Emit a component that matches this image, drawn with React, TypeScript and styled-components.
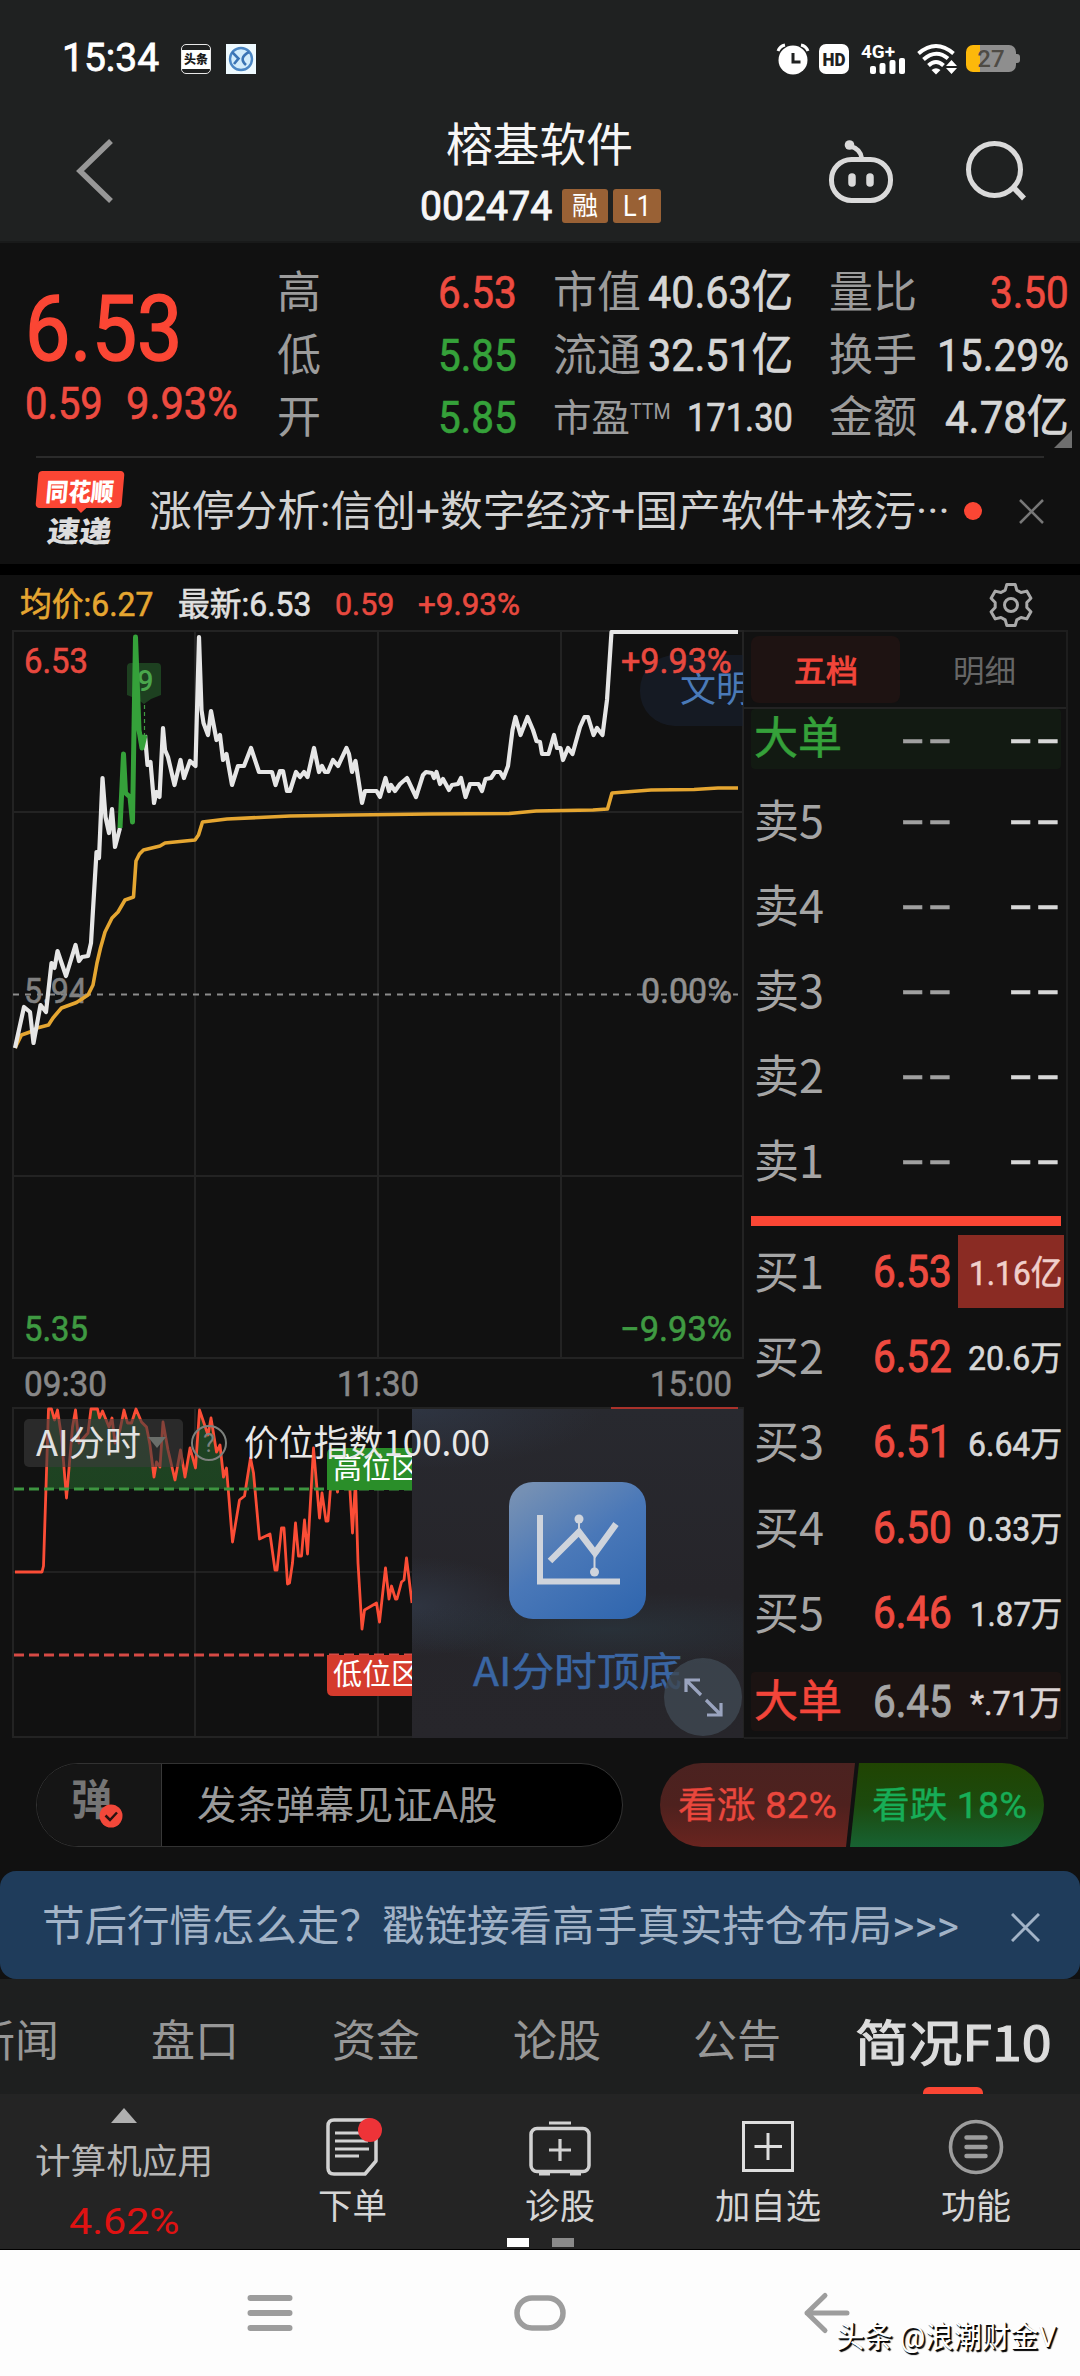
import React, { useLayoutEffect, useRef, useState } from 'react';
import styled, { createGlobalStyle } from 'styled-components';

const RED = '#fb4634';
const GREEN = '#35a13a';
const LATIN = `Roboto, "Noto Sans CJK SC", sans-serif`;
const CJK = `"Noto Sans CJK SC", sans-serif`;

const Global = createGlobalStyle`
  * { box-sizing: border-box; }
  html, body { margin: 0; padding: 0; background: #111; }
  body { font-family: ${LATIN}; }
  svg { display: block; flex: none; }
`;

/* ---------- text fitted to a fixed measure ---------- */
const FitBox = styled.span<{ $w: number; $size: number; $color: string; $weight: number; $cjk?: boolean; $ml: number; $spacing: number; $stroke: number }>`
  display: block;
  flex: none;
  width: ${p => p.$w}px;
  margin-left: ${p => p.$ml}px;
  font-family: ${p => (p.$cjk ? CJK : LATIN)};
  font-size: ${p => p.$size}px;
  line-height: ${p => Math.round(p.$size * 1.1)}px;
  font-weight: ${p => p.$weight};
  letter-spacing: ${p => p.$spacing}px;
  -webkit-text-stroke: ${p => p.$stroke}px ${p => p.$color};
  color: ${p => p.$color};
  white-space: pre;
`;
const FitInner = styled.span`
  display: inline-block;
  transform-origin: 0 50%;
`;

type FitProps = { w: number; size: number; color?: string; weight?: number; cjk?: boolean; ml?: number; spacing?: number; stroke?: number; children: React.ReactNode };
function Fit({ w, size, color = '#d6d6d6', weight = 400, cjk, ml = 0, spacing = 0, stroke = 0, children }: FitProps) {
  const ref = useRef<HTMLSpanElement>(null);
  const [scale, setScale] = useState(1);
  useLayoutEffect(() => {
    if (ref.current) setScale(w / ref.current.offsetWidth);
  }, [w, children]);
  return (
    <FitBox $w={w} $size={size} $color={color} $weight={weight} $cjk={cjk} $ml={ml} $spacing={spacing} $stroke={stroke}>
      <FitInner ref={ref} style={{ transform: `scaleX(${scale})` }}>{children}</FitInner>
    </FitBox>
  );
}

/* ---------- shell ---------- */
const Screen = styled.div`
  width: 1080px;
  height: 2376px;
  background: #111;
  overflow: hidden;
  display: flex;
  flex-direction: column;
`;
const Top = styled.header`
  height: 243px;
  background: #1f2121;
  border-bottom: 2px solid #191a1a;
  flex: none;
`;
const StatusBar = styled.div`
  height: 92px;
  padding: 25px 60px 0 62px;
  display: flex;
  align-items: center;
  justify-content: space-between;
`;
const Cluster = styled.div<{ $gap: number }>`
  display: flex;
  align-items: center;
  gap: ${p => p.$gap}px;
`;
const ToutiaoIcon = styled.span`
  width: 30px;
  height: 30px;
  border: 1px solid #e8e8e8;
  border-radius: 5px;
  background: linear-gradient(#1f2121 0 5px, #fff 5px 24px, #1f2121 24px);
  font: 900 12px/28px ${CJK};
  color: #1c1c1c;
  text-align: center;
  margin-left: 22px;
`;
const Battery = styled.span`
  width: 50px;
  height: 27px;
  border-radius: 7px;
  background: linear-gradient(90deg, #fdb80a 0 14px, #8e8e8e 14px);
  font: 500 24px/28px Roboto, sans-serif;
  color: #4e4b45;
  text-align: center;
  margin-right: 4px;
  position: relative;
  &::after {
    content: '';
    position: absolute;
    right: -4px;
    top: 9px;
    width: 4px;
    height: 9px;
    border-radius: 0 3px 3px 0;
    background: #8e8e8e;
  }
`;
const TitleBar = styled.div`
  height: 150px;
  display: grid;
  grid-template-columns: 421px 245px 1fr;
`;
const BackCell = styled.div`padding: 46px 0 0 74px;`;
const TitleCell = styled.div`
  display: flex;
  flex-direction: column;
  padding-top: 24px;
`;
const CodeRow = styled.div`
  display: flex;
  align-items: center;
  margin-top: 21px;
  height: 36px;
`;
const Badges = styled.div`
  display: flex;
  gap: 5px;
  margin-left: 10px;
`;
const Badge = styled.span<{ $w: number }>`
  width: ${p => p.$w}px;
  height: 34px;
  border-radius: 3px;
  background: #996135;
  display: flex;
  align-items: center;
  justify-content: center;
`;
const ActionCell = styled.div`
  display: flex;
  gap: 40px;
  padding: 46px 0 0 160px;
`;

/* ---------- quote ---------- */
const Quote = styled.section`
  height: 213px;
  margin: 0 8px 0 0;
  padding-top: 19px;
  display: flex;
  position: relative;
  flex: none;
`;
const PriceCol = styled.div`
  width: 277px;
  padding: 17px 0 0 25px;
`;
const PriceRow = styled.div<{ $h: number }>`
  display: flex;
  align-items: center;
  height: ${p => p.$h}px;
`;
const StatCol = styled.div<{ $w: number; $ml: number }>`
  width: ${p => p.$w}px;
  margin-left: ${p => p.$ml}px;
`;
const Stat = styled.div`
  height: 62.5px;
  display: flex;
  align-items: center;
  justify-content: space-between;
`;
const Sup = styled.span`
  display: flex;
  align-items: flex-start;
  height: 36px;
`;
const Corner = styled.i`
  position: absolute;
  right: 0;
  bottom: 8px;
  border-left: 18px solid transparent;
  border-bottom: 18px solid #6f6f6f;
`;
const News = styled.section`
  height: 108px;
  margin: 0 36px;
  border-top: 2px solid #2b2b2b;
  display: flex;
  align-items: center;
  flex: none;
`;
const NewsLogo = styled.div`
  width: 90px;
  height: 80px;
  display: flex;
  flex-direction: column;
  align-items: center;
`;
const LogoTop = styled.div`
  width: 86px;
  height: 37px;
  border-radius: 4px;
  background: ${RED};
  transform: skewX(-5deg);
  display: flex;
  align-items: center;
  justify-content: center;
  position: relative;
  &::after {
    content: '';
    position: absolute;
    left: 40px;
    top: 36px;
    border: 6px solid transparent;
    border-top-color: ${RED};
    border-bottom: 0;
  }
`;
const LogoBottom = styled.div`
  transform: skewX(-8deg);
  margin-top: 5px;
`;
const Headline = styled.div`padding: 2px 0 0 25px;`;
const Dot = styled.i`
  width: 18px;
  height: 18px;
  border-radius: 50%;
  background: ${RED};
  margin: 0 37px 0 14px;
`;
const Gap = styled.div`
  height: 11px;
  background: #000;
  flex: none;
`;

/* ---------- market area ---------- */
const LegendBar = styled.div`
  height: 55px;
  padding: 4px 45px 0 21px;
  display: flex;
  align-items: center;
  flex: none;
`;
const Spacer = styled.span`flex: 1;`;
const Market = styled.section`
  display: grid;
  grid-template-columns: 732px 324px;
  padding-left: 12px;
  height: 1109px;
  flex: none;
`;
const Charts = styled.div`position: relative;`;
const BarragePill = styled.div`
  position: absolute;
  left: 628px;
  top: 25px;
  width: 103px;
  height: 71px;
  border-radius: 35px 0 0 35px;
  background: rgba(25, 34, 48, .6);
  padding: 15px 0 0 40px;
  overflow: hidden;
`;
const TopPercent = styled.div`
  position: absolute;
  left: 609px;
  top: 12px;
`;
const Promo = styled.div`
  position: absolute;
  left: 400px;
  top: 779px;
  width: 331px;
  height: 329px;
  overflow: hidden;
  background:
    radial-gradient(ellipse 220px 38px at 60% 67%, rgba(42, 56, 66, .6), transparent),
    radial-gradient(ellipse 120px 50px at 0 60%, rgba(55, 68, 88, .5), transparent),
    radial-gradient(ellipse 190px 60px at 0 0, rgba(50, 60, 78, .6), transparent),
    linear-gradient(#28292f, #26252a 55%, #27262b);
  display: flex;
  flex-direction: column;
  padding: 73px 0 0 61px;
`;
const PromoIcon = styled.div`
  width: 137px;
  height: 137px;
  margin-left: 36px;
  border-radius: 24px;
  background: linear-gradient(145deg, #7590b4 8%, #4a78b8 48%, #2e65ae);
`;
const PromoText = styled.div`margin-top: 28px;`;
const Expand = styled.div`
  position: absolute;
  left: 252px;
  top: 249px;
  width: 78px;
  height: 78px;
  border-radius: 50%;
  background: rgba(62, 72, 82, .82);
`;
const IndexLabel = styled.div`
  position: absolute;
  left: 232px;
  top: 790px;
`;
const Book = styled.div`
  border: 2px solid #1e1e1e;
  border-left: 0;
  padding: 0 5px 0 7px;
`;
const BookTabs = styled.div`
  height: 77px;
  margin: 0 -5px 0 -7px;
  padding: 4px 12px 4px 7px;
  border-bottom: 2px solid #232323;
  display: grid;
  grid-template-columns: 149px 1fr;
`;
const BookTab = styled.div<{ $on?: boolean }>`
  display: flex;
  align-items: center;
  justify-content: center;
  border-radius: 8px;
  padding: 0 0 2px ${p => (p.$on ? 0 : 14)}px;
  background: ${p => (p.$on ? '#1e1312' : 'transparent')};
`;
const BookRow = styled.div<{ $h: number; $bg?: string }>`
  height: ${p => p.$h}px;
  background: ${p => p.$bg || 'transparent'};
  display: grid;
  grid-template-columns: 96px 110px 104px;
  align-items: center;
  padding-left: 3px;
  border-radius: 4px;
`;
const Level = styled.div`padding-bottom: 4px;`;
const Sells = styled.div`padding: 9px 0 2px;`;
const Buys = styled.div`padding-bottom: 17px;`;
const Right = styled.div<{ $pr?: number }>`
  display: flex;
  justify-content: flex-end;
  padding-right: ${p => p.$pr || 0}px;
`;
const VolCell = styled.div<{ $hot?: boolean }>`
  display: flex;
  align-items: center;
  justify-content: flex-end;
  height: ${p => (p.$hot ? 73 : 50)}px;
  margin-left: -2px;
  padding: 4px 2px 0 0;
  background: ${p => (p.$hot ? '#8a2b23' : 'transparent')};
`;
const SplitBar = styled.div`
  height: 10px;
  margin: 11px 0 3px;
  width: 310px;
  background: ${RED};
`;

/* ---------- barrage & banner ---------- */
const Barrage = styled.section`
  height: 132px;
  padding: 24px 36px 24px;
  display: flex;
  gap: 37px;
  flex: none;
`;
const InputPill = styled.div`
  width: 587px;
  height: 84px;
  border: 1px solid #323232;
  border-radius: 42px;
  background: #000;
  display: flex;
  overflow: hidden;
`;
const Toggle = styled.div`
  width: 125px;
  background: #151515;
  border-right: 1px solid #383838;
  padding: 14px 0 0 34px;
  position: relative;
`;
const Check = styled.span`
  position: absolute;
  left: 62px;
  top: 40px;
`;
const Hint = styled.div`
  display: flex;
  align-items: center;
  padding: 2px 0 0 35px;
`;
const Vote = styled.div`
  display: flex;
  width: 384px;
  height: 84px;
  border-radius: 42px;
  overflow: hidden;
`;
const VoteSide = styled.div<{ $up?: boolean }>`
  width: ${p => (p.$up ? 195 : 194)}px;
  margin-left: ${p => (p.$up ? 0 : -5)}px;
  flex: none;
  display: flex;
  align-items: center;
  padding: 2px 0 0 ${p => (p.$up ? 18 : 22)}px;
  background: ${p => (p.$up ? 'linear-gradient(#4b2220, #4e211e 50%, #69241f)' : 'linear-gradient(#204402, #1c4a0e 50%, #176232)')};
  clip-path: ${p => (p.$up ? 'polygon(0 0, 100% 0, 186px 100%, 0 100%)' : 'polygon(9px 0, 100% 0, 100% 100%, 0 100%)')};
`;
const Banner = styled.section`
  height: 108px;
  border-radius: 16px;
  background: #1f3c5b;
  display: flex;
  align-items: center;
  justify-content: space-between;
  padding: 4px 40px 0 42px;
  flex: none;
`;

/* ---------- tabs & toolbar ---------- */
const Tabs = styled.nav`
  height: 115px;
  background: #1e1f1f;
  display: flex;
  align-items: center;
  padding: 11px 0 0;
  position: relative;
  flex: none;
`;
const ActiveTab = styled.div`padding: 0 0 5px 74px;`;
const Indicator = styled.i`
  position: absolute;
  left: 923px;
  top: 108px;
  width: 60px;
  height: 9px;
  border-radius: 6px 6px 2px 2px;
  background: ${RED};
`;
const Toolbar = styled.nav`
  height: 156px;
  background: #242424;
  border-bottom: 1px solid #000;
  display: grid;
  grid-template-columns: 248px 208px 208px 208px 208px;
  position: relative;
  flex: none;
`;
const Sector = styled.div`
  padding: 14px 0 0;
  display: flex;
  flex-direction: column;
  align-items: center;
  gap: 20px;
`;
const Tri = styled.i`
  border: 13px solid transparent;
  border-top: 0;
  border-bottom: 15px solid #b0b0b0;
`;
const Tool = styled.div`
  display: flex;
  flex-direction: column;
  align-items: center;
  gap: 10px;
  padding: 22px 0 0;
`;
const Pager = styled.div`
  position: absolute;
  left: 507px;
  top: 144px;
  display: flex;
  gap: 23px;
`;
const Page = styled.i<{ $on?: boolean }>`
  width: 22px;
  height: 9px;
  background: ${p => (p.$on ? '#fff' : '#8a8a8a')};
`;
const SysNav = styled.footer`
  flex: 1;
  background: #fdfdfd;
  position: relative;
  display: flex;
  align-items: flex-start;
  padding: 41px 0 0 246px;
`;
const Watermark = styled.div`
  position: absolute;
  left: 836px;
  top: 70px;
  text-shadow: 2px 2px 1px #000, 1px 1px 0 #222;
`;

/* ---------- icons ---------- */
const Cross = ({ s, c, w }: { s: number; c: string; w: number }) => (
  <svg width={s} height={s} viewBox={`0 0 ${s} ${s}`} stroke={c} strokeWidth={w}><path d={`M1 1 L${s - 1} ${s - 1} M${s - 1} 1 L1 ${s - 1}`} /></svg>
);

const StatusIcons = () => (
  <svg width="198" height="34" viewBox="760 41 198 34">
    <g fill="none" stroke="#fff" strokeWidth="3">
      <path d="M778 50 Q780 45 785 44 M808 50 Q806 45 801 44" />
    </g>
    <circle cx="793" cy="59" r="14.5" fill="#fff" />
    <path d="M793 52 V61 H800.500" fill="none" stroke="#1f2121" strokeWidth="3" />
    <rect x="819" y="43" width="30" height="30" rx="7" fill="#fff" />
    <text x="822.5" y="64.500" fontSize="18" fontWeight="900" fill="#1f2121" textLength="23" lengthAdjust="spacingAndGlyphs">HD</text>
    <text x="861" y="57" fontSize="18" fontWeight="700" fill="#fff" textLength="34" lengthAdjust="spacingAndGlyphs">4G+</text>
    <g fill="#fff">
      <rect x="870" y="65" width="6" height="8" rx="2" /><rect x="879.500" y="62" width="6" height="11" rx="2" /><rect x="889.500" y="59" width="6" height="14" rx="2" /><rect x="899" y="57" width="6" height="16" rx="2" />
      <path d="M931.500 69 Q936 65.500 940.500 69 L936 73.500 Z" />
      <path d="M946 65 L951.500 59 L957 65 Z M946 67 L951.500 73 L957 67 Z" />
    </g>
    <g fill="none" stroke="#fff" strokeWidth="4">
      <path d="M918.500 52.500 Q936 37.500 953.500 52.500" /><path d="M923.500 58.500 Q936 47.500 948 57.500" /><path d="M928.500 64.500 Q936 57.500 943.500 64.500" />
    </g>
  </svg>
);

const BankIcon = () => (
  <svg width="30" height="30" viewBox="0 0 30 30">
    <rect width="30" height="30" fill="#eefaff" />
    <circle cx="15" cy="15" r="11" fill="#d3ecfb" stroke="#4b86c4" strokeWidth="2.4" />
    <path d="M6 8 L12.500 14.500 L8 20 M23 8 Q12 14 20 21" fill="none" stroke="#3b74b4" strokeWidth="2.6" />
  </svg>
);

const Gear = () => {
  const pts: string[] = [];
  for (let i = 0; i < 6; i++) {
    const a = (i * Math.PI) / 3 + Math.PI / 2;
    [[-0.37, 16], [-0.2, 21], [0.2, 21], [0.37, 16]].forEach(([d, r]) =>
      pts.push(`${24 + r * Math.cos(a + d)},${24 + r * Math.sin(a + d)}`));
  }
  return (
    <svg width="48" height="48" viewBox="0 0 48 48" fill="none" stroke="#a9a9a9" strokeWidth="3" strokeLinejoin="round">
      <polygon points={pts.join(' ')} /><circle cx="24" cy="24" r="6.500" />
    </svg>
  );
};

/* ---------- chart data ---------- */
const P1 = '15,1048 24,1007 30,1012 33.5,1043 40.5,1005 46,1012 51.5,963 54.5,968 57.5,951 66,976 75.5,945 79,961 82,957 88,956 91,943 96.5,852 99,858 102.5,778 105.5,817 109,833 112,809 115,847 120,828';
const P2 = '120,828 123.5,754 125.5,793 130,797 132.5,822 135.5,637 139,730 142,748 145,735';
const P3 = '145,735 147.5,765 150.5,762 154,803 156.5,792 159.5,797 163,728 165,750 168,757 174.5,785 180.5,760 184,778 190,761 195.5,766 199,637 201.5,710 203.5,723 208,735 211,711 216.5,740 220,735 223,760 226.5,754 232,785 238,766 244,766 251,748 259,772 272,772 275.5,785 280,771 283,771 287,791 290,791 296,772 300,777 304,772 307.5,777 314,748 319,772 322,766 325,772 328,772 333,760 338,766 346.5,748 349,754 352,772 355.5,761 362,803 365,791 376.5,791 380,797 385.5,778 389,791 391,785 395,791 400,784 407,778 416,797 423,775 426,772 432,773 434,778 436.5,772 440,784 443,779 449,790 452,785 458,784 461,778 465.5,797 470,784 478.5,784 482,791 485.5,779 491,778 495,772 500,772 503.5,778 508,766 512.5,730 515.5,717 520.5,735 527.5,717 533,730 536.5,741 540,742 542,754 548.5,754 554,735 557,748 560.5,748 563,760 568,748 572.5,754 580,727 584.5,717 588,717 593.5,735 597,728 602.5,735 607,700 611.5,632 738,632';
const AVG = '15,1048 21.5,1035 30,1032 37,1028 48.5,1025 53,1018 61.5,1008 76.5,1002.5 88,995 93,985 97,963 100.5,948 105,932 112,918 118,912 125,900 133.5,897 136,861 139.5,854 143.5,850 160,846 165,843 195,840 198.5,835 202.5,822 227,819 290,816 352,815 430,814 509.5,813.5 536,811 593,810 607.5,809 612,793 651,790 694,789.5 718,788 738,788';
const IDX = '15,1572 42,1572 43.5,1566 48.5,1409 51.5,1409 54.5,1420 57.5,1410 61.5,1437 66.5,1498 72.5,1427 75.5,1410 79,1443 88,1433 91,1409 97.5,1409 99.5,1418 102.5,1411 109,1427 112,1418 115,1443 120,1430 124,1410 127.5,1423 131.5,1423 136,1409 141.5,1422 146.5,1427 150,1445 154,1477 156.5,1462 160,1467 163,1422 168,1450 175,1480 180.5,1450 185,1477 190,1448 195.5,1468 199.5,1410 208,1435 211,1418 216.5,1452 220,1445 223.5,1477 226.5,1468 232.5,1542 239.5,1500 244.5,1496 250.5,1458 253.5,1473 259.5,1539 270,1534 275,1570 277,1570 281.5,1528 284,1528 287.5,1584 289.5,1583 292.5,1563 295.5,1523 298.5,1556 301.5,1556 304.5,1520 307.5,1554 313.5,1448 319.5,1518 322,1493 326,1521 328,1521 332.5,1462 337.5,1492 341.5,1450 348,1457 352.5,1533 355.5,1480 358,1563 362,1629 364.5,1610 376.5,1603 379.5,1622 385.5,1568 389,1599 391.5,1586 395.5,1599 397,1599 401.5,1582 404,1580 406.5,1558 412,1603';

const Lbl = ({ x, y, w, c, children }: { x: number; y: number; w: number; c: string; children: string }) => (
  <text x={x} y={y} textLength={w} lengthAdjust="spacingAndGlyphs" fontSize="35" fill={c} stroke={c} strokeWidth=".6" fontFamily="Roboto, sans-serif">{children}</text>
);

const ChartSvg = () => (
  <svg width="732" height="1109" viewBox="12 630 732 1109" fill="none">
    <defs>
      <clipPath id="high"><rect x="12" y="1408" width="400" height="81" /></clipPath>
      <clipPath id="left"><rect x="12" y="1400" width="400" height="340" /></clipPath>
      <linearGradient id="hg" x1="0" y1="0" x2="0" y2="1"><stop offset="0" stopColor="#204424" /><stop offset="1" stopColor="#163d18" /></linearGradient>
    </defs>
    <g stroke="#232323" strokeWidth="2">
      <rect x="13" y="631" width="730" height="727" />
      <path d="M195 631V1358 M378 631V1358 M561 631V1358 M13 812H743 M13 1176H743" />
      <rect x="13" y="1408" width="730" height="329" />
      <path d="M195 1408V1737 M378 1408V1737" /><path d="M13 1572H412" stroke="#333" strokeWidth="1" />
    </g>
    <path d="M13 994.500H738" stroke="#8c8c8c" strokeWidth="2" strokeDasharray="6 6" />
    <Lbl x={24} y={1003} w={63} c="#808080">5.94</Lbl>
    <Lbl x={641} y={1003} w={91} c="#909090">0.00%</Lbl>
    <path d="M131 663H157Q161 663 161 667V695L151 699L144 704L137 699L127 695V667Q127 663 131 663Z" fill="#1d4020" />
    <text x="137" y="691" fontSize="29" fontWeight="500" fill="#4aa64c" fontFamily="Roboto, sans-serif">9</text>
    <path d="M144.500 705V735" stroke="#3f9a42" strokeWidth="1.200" strokeDasharray="4 3" />
    <polyline points={AVG} stroke="#e5a631" strokeWidth="3.600" strokeLinejoin="round" />
    <polyline points={P1} stroke="#e6e6e6" strokeWidth="4.200" strokeLinejoin="round" />
    <polyline points={P3} stroke="#e6e6e6" strokeWidth="4.200" strokeLinejoin="round" />
    <polyline points={P2} stroke="#35a13a" strokeWidth="5" strokeLinejoin="round" />
    <Lbl x={24} y={673} w={64} c="#e8493f">6.53</Lbl>
    <Lbl x={24} y={1341} w={64} c="#3f9a42">5.35</Lbl>
    <Lbl x={620} y={1341} w={112} c="#3f9a42">−9.93%</Lbl>
    <Lbl x={24} y={1396} w={83} c="#888888">09:30</Lbl>
    <Lbl x={337} y={1396} w={82} c="#888888">11:30</Lbl>
    <Lbl x={650} y={1396} w={82} c="#888888">15:00</Lbl>

    <polygon points={`15,1489 ${IDX} 412,1740 44,1740`} fill="url(#hg)" clipPath="url(#high)" />
    <polyline points={IDX} stroke="#fb4d36" strokeWidth="2.800" strokeLinejoin="round" clipPath="url(#left)" />
    <path d="M14 1489H412" stroke="#3d9440" strokeWidth="3" strokeDasharray="10 5" />
    <path d="M14 1655H412" stroke="#d64a45" strokeWidth="3" strokeDasharray="10 5" />
    <path d="M611 1408H738" stroke="#d8392f" strokeWidth="1.500" />
    <rect x="24" y="1419" width="159" height="48" rx="5" fill="#3c3c3c" fillOpacity=".6" />
    <text x="36" y="1456" fontSize="35" fill="#e2e2e2" textLength="105" lengthAdjust="spacingAndGlyphs" fontFamily={CJK}>AI分时</text>
    <path d="M148 1437H166L157 1448Z" fill="#6a6e6a" />
    <circle cx="209" cy="1443" r="17" stroke="#7d817d" strokeWidth="2" />
    <text x="203" y="1452" fontSize="25" fill="#7d817d" fontFamily="Roboto, sans-serif">?</text>
    <g clipPath="url(#left)" fontFamily={CJK} fontSize="29" fill="#fff">
      <path d="M333 1448H412V1490H327V1454Q327 1448 333 1448Z" fill="#2a8e29" />
      <text x="333" y="1479">高位区</text>
      <path d="M327 1655H412V1696H333Q327 1696 327 1690Z" fill="#d53b2d" />
      <text x="333" y="1685">低位区</text>
    </g>
  </svg>
);

const Dashes = ({ c }: { c: string }) => <Fit w={54} size={46} color={c} spacing={3.4} stroke={0.4}>--</Fit>;

const buys = [
  ['买1', '6.53', '1.16亿', 93], ['买2', '6.52', '20.6万', 94], ['买3', '6.51', '6.64万', 94], ['买4', '6.50', '0.33万', 94], ['买5', '6.46', '1.87万', 92],
] as const;

const tabs = [['新闻', -29], ['盘口', 92], ['资金', 93], ['论股', 93], ['公告', 92]] as const;

export default function App() {
  return (
    <Screen>
      <Global />
      <Top>
        <StatusBar>
          <Cluster $gap={15}>
            <Cluster $gap={0}>
              <Fit w={97} size={39} color="#fff" stroke={0.8}>15:34</Fit>
              <ToutiaoIcon>头条</ToutiaoIcon>
            </Cluster>
            <BankIcon />
          </Cluster>
          <Cluster $gap={8}><StatusIcons /><Battery>27</Battery></Cluster>
        </StatusBar>
        <TitleBar>
          <BackCell><svg width="42" height="66" viewBox="74 138 42 66" fill="none" stroke="#979797" strokeWidth="5.500"><path d="M111 141L80 171L111 201" /></svg></BackCell>
          <TitleCell>
            <Fit w={187} size={46} ml={25} color="#f6f6f6" cjk>榕基软件</Fit>
            <CodeRow>
              <Fit w={132} size={41} ml={-1} color="#f6f6f6" stroke={0.9}>002474</Fit>
              <Badges>
                <Badge $w={46}><Fit w={26} size={26} color="#fff">融</Fit></Badge>
                <Badge $w={48}><Fit w={28} size={29} color="#fff">L1</Fit></Badge>
              </Badges>
            </CodeRow>
          </TitleCell>
          <ActionCell>
            <svg width="96" height="68" viewBox="826 138 96 68" fill="none" stroke="#dadada" strokeWidth="5">
              <rect x="831.500" y="159.500" width="59" height="41" rx="20" />
              <circle cx="849.500" cy="145" r="4.800" fill="#dadada" stroke="none" />
              <path d="M850 146Q861 149 862 159" strokeWidth="4.500" />
              <path d="M852 177V183M870 177V183" strokeWidth="7.500" strokeLinecap="round" />
            </svg>
            <svg width="66" height="68" viewBox="962 138 66 68" fill="none" stroke="#dadada" strokeWidth="5">
              <circle cx="994.500" cy="169.500" r="26" /><path d="M1014 188L1024 198.500" strokeWidth="5.500" />
            </svg>
          </ActionCell>
        </TitleBar>
      </Top>

      <Quote>
        <PriceCol>
          <PriceRow $h={100}><Fit w={157} size={91} color={RED} stroke={1.6}>6.53</Fit></PriceRow>
          <PriceRow $h={50}><Fit w={78} size={45} color="#ee4b40" stroke={0.7}>0.59</Fit><Fit w={112} size={45} ml={23} color="#ee4b40" stroke={0.7}>9.93%</Fit></PriceRow>
        </PriceCol>
        <StatCol $w={240} $ml={0}>
          <Stat><Fit w={44} size={44} color="#9c9c9c">高</Fit><Fit w={79} size={45} color="#ee4b40" stroke={0.7}>6.53</Fit></Stat>
          <Stat><Fit w={44} size={44} color="#9c9c9c">低</Fit><Fit w={79} size={45} color={GREEN} stroke={0.7}>5.85</Fit></Stat>
          <Stat><Fit w={44} size={44} color="#9c9c9c">开</Fit><Fit w={79} size={45} color={GREEN} stroke={0.7}>5.85</Fit></Stat>
        </StatCol>
        <StatCol $w={240} $ml={36}>
          <Stat><Fit w={88} size={44} color="#9c9c9c">市值</Fit><Fit w={145} size={45} stroke={0.7}>40.63亿</Fit></Stat>
          <Stat><Fit w={88} size={44} color="#9c9c9c">流通</Fit><Fit w={145} size={45} stroke={0.7}>32.51亿</Fit></Stat>
          <Stat><Cluster $gap={0}><Fit w={77} size={38} color="#9c9c9c">市盈</Fit><Sup><Fit w={41} size={22} color="#9c9c9c">TTM</Fit></Sup></Cluster><Fit w={106} size={39} stroke={0.7}>171.30</Fit></Stat>
        </StatCol>
        <StatCol $w={240} $ml={36}>
          <Stat><Fit w={88} size={44} color="#9c9c9c">量比</Fit><Fit w={79} size={45} color="#ee4b40" stroke={0.7}>3.50</Fit></Stat>
          <Stat><Fit w={88} size={44} color="#9c9c9c">换手</Fit><Fit w={132} size={45} stroke={0.7}>15.29%</Fit></Stat>
          <Stat><Fit w={88} size={44} color="#9c9c9c">金额</Fit><Fit w={124} size={45} stroke={0.7}>4.78亿</Fit></Stat>
        </StatCol>
        <Corner />
      </Quote>
      <News>
        <NewsLogo>
          <LogoTop><Fit w={68} size={25} color="#fff" weight={900} cjk>同花顺</Fit></LogoTop>
          <LogoBottom><Fit w={64} size={29} color="#ddd" weight={900} cjk>速递</Fit></LogoBottom>
        </NewsLogo>
        <Headline><Fit w={801} size={42} color="#d2d2d2">涨停分析:信创+数字经济+国产软件+核污···</Fit></Headline>
        <Dot />
        <Cross s={25} c="#777" w={2.5} />
      </News>
      <Gap />

      <LegendBar>
        <Fit w={133} size={33} ml={-1} color="#e5a631" stroke={0.6}>均价:6.27</Fit>
        <Fit w={133} size={33} ml={25} color="#e0e0e0" stroke={0.6}>最新:6.53</Fit>
        <Fit w={59} size={32} ml={24} color="#e8493f" stroke={0.6}>0.59</Fit>
        <Fit w={102} size={32} ml={24} color="#e8493f" stroke={0.6}>+9.93%</Fit>
        <Spacer />
        <Gear />
      </LegendBar>

      <Market>
        <Charts>
          <ChartSvg />
          <BarragePill><Fit w={72} size={36} color="#4a7ab8">文明</Fit></BarragePill>
          <TopPercent><Fit w={111} size={35} color="#e8493f" stroke={0.6}>+9.93%</Fit></TopPercent>
          <Promo>
            <PromoIcon>
              <svg width="137" height="137" viewBox="509 1482 137 137" fill="none" stroke="#cfd4dc" strokeWidth="6">
                <path d="M540 1515V1581.500H620" /><path d="M550 1561L579 1532L595 1553L616 1524" strokeWidth="6.500" />
                <path d="M579 1519V1533M594.500 1552V1572" strokeWidth="2" />
                <circle cx="579" cy="1519" r="4.500" fill="#cfd4dc" stroke="none" /><circle cx="594.500" cy="1572" r="4.500" fill="#cfd4dc" stroke="none" />
              </svg>
            </PromoIcon>
            <PromoText><Fit w={209} size={40} color="#3a66a4" stroke={0.5} cjk>AI分时顶底</Fit></PromoText>
            <Expand>
              <svg width="78" height="78" viewBox="664 1658 78 78" fill="none" stroke="#9aa4bf" strokeWidth="3.200">
                <path d="M686 1692V1680H700M687 1681L701 1695M721 1703V1715H707M720 1714L706 1700" />
              </svg>
            </Expand>
          </Promo>
          <IndexLabel><Fit w={246} size={36} color="#e8e8e8" cjk>价位指数100.00</Fit></IndexLabel>
        </Charts>
        <Book>
          <BookTabs>
            <BookTab $on><Fit w={64} size={31} color="#f3453a" stroke={1} cjk>五档</Fit></BookTab>
            <BookTab><Fit w={63} size={31} color="#666" cjk>明细</Fit></BookTab>
          </BookTabs>
          <BookRow $h={60} $bg="#121a12">
            <Fit w={88} size={44} color={GREEN} stroke={0.6}>大单</Fit><Right $pr={4}><Dashes c="#a0a0a0" /></Right><Right><Dashes c="#d8d8d8" /></Right>
          </BookRow>
          <Sells>
            {['卖5', '卖4', '卖3', '卖2', '卖1'].map(n => (
              <BookRow key={n} $h={85}>
                <Level><Fit w={70} size={45} color="#a5a5a5" cjk>{n}</Fit></Level><Right $pr={4}><Dashes c="#a0a0a0" /></Right><Right><Dashes c="#d8d8d8" /></Right>
              </BookRow>
            ))}
          </Sells>
          <SplitBar />
          <Buys>
            {buys.map(([n, p, v, w], i) => (
              <BookRow key={n} $h={85.3}>
                <Level><Fit w={70} size={45} color="#a5a5a5" cjk>{n}</Fit></Level>
                <Right $pr={8}><Fit w={79} size={45} color="#ee4b40" stroke={1}>{p}</Fit></Right>
                <VolCell $hot={i === 0}><Fit w={w} size={34} color={i === 0 ? '#f0cfcb' : '#d8d8d8'} stroke={0.6}>{v}</Fit></VolCell>
              </BookRow>
            ))}
          </Buys>
          <BookRow $h={59} $bg="#1b1312">
            <Fit w={88} size={44} color="#f3453a" stroke={0.6}>大单</Fit>
            <Right $pr={8}><Fit w={79} size={45} color="#a5a5a5" stroke={1}>6.45</Fit></Right>
            <VolCell><Fit w={92} size={34} color="#dcd4d4" stroke={0.6}>*.71万</Fit></VolCell>
          </BookRow>
        </Book>
      </Market>

      <Barrage>
        <InputPill>
          <Toggle>
            <Fit w={41} size={42} color="#757575" weight={700}>弹</Fit>
            <Check><svg width="24" height="24" viewBox="0 0 24 24"><circle cx="12" cy="12" r="11.500" fill="#f2483a" /><path d="M6.500 11.500L11 16L18 8.500" fill="none" stroke="#2a1210" strokeWidth="2.500" /></svg></Check>
          </Toggle>
          <Hint><Fit w={300} size={39} color="#9a9a9a">发条弹幕见证A股</Fit></Hint>
        </InputPill>
        <Vote>
          <VoteSide $up><Fit w={159} size={36} color="#ea473d" stroke={0.4}>看涨 82%</Fit></VoteSide>
          <VoteSide><Fit w={155} size={36} color="#17ad57" stroke={0.4}>看跌 18%</Fit></VoteSide>
        </Vote>
      </Barrage>
      <Banner>
        <Fit w={917} size={42} color="#a2b3c7">节后行情怎么走？戳链接看高手真实持仓布局&gt;&gt;&gt;</Fit>
        <Cross s={29} c="#a2b3c7" w={3} />
      </Banner>
      <Tabs>
        {tabs.map(([t, ml]) => <Fit key={t} w={88} size={44} ml={ml} color="#979797">{t}</Fit>)}
        <ActiveTab><Fit w={196} size={49} color="#dcdcdc" stroke={1.2} cjk>简况F10</Fit></ActiveTab>
        <Indicator />
      </Tabs>
      <Toolbar>
        <Sector>
          <Tri />
          <Fit w={178} size={35} color="#b8b8b8">计算机应用</Fit>
          <Fit w={111} size={36} color="#e01212">4.62%</Fit>
        </Sector>
        <Tool>
          <svg width="60" height="62" viewBox="322 2116 60 62" fill="none" stroke="#d2d2d2" strokeWidth="3.500">
            <path d="M370 2120H334Q328 2120 328 2126V2168Q328 2174 334 2174H365L376 2161V2130" strokeLinejoin="round" />
            <path d="M335 2133H362M335 2141H368M335 2149H369M335 2156H359" strokeWidth="3" />
            <circle cx="370" cy="2130" r="12" fill="#ee3338" stroke="none" />
          </svg>
          <Fit w={69} size={35}>下单</Fit>
        </Tool>
        <Tool>
          <svg width="64" height="62" viewBox="528 2116 64 62" fill="none" stroke="#d2d2d2" strokeWidth="3.500">
            <rect x="531" y="2128.500" width="58" height="43" rx="6" /><path d="M549 2123H571M539 2174H550M570 2174H581M560 2139V2161M549 2150H571" strokeWidth="3.200" />
          </svg>
          <Fit w={70} size={35}>诊股</Fit>
        </Tool>
        <Tool>
          <svg width="60" height="62" viewBox="737 2116 60 62" fill="none" stroke="#dedede" strokeWidth="3">
            <rect x="742.500" y="2122.500" width="49" height="48" /><path d="M767 2133V2160M753.500 2146.500H781" />
          </svg>
          <Fit w={106} size={35}>加自选</Fit>
        </Tool>
        <Tool>
          <svg width="60" height="62" viewBox="946 2116 60 62" fill="none" stroke="#9d9d9d" strokeWidth="3.600">
            <circle cx="976" cy="2147" r="25.500" /><path d="M966.500 2137.500H985.500M966.500 2147H985.500M966.500 2156H985.500" strokeWidth="4.500" strokeLinecap="round" />
          </svg>
          <Fit w={70} size={35}>功能</Fit>
        </Tool>
        <Pager><Page $on /><Page /></Pager>
      </Toolbar>
      <SysNav>
        <svg width="610" height="46" viewBox="246 2291 610 46" fill="none" stroke="#9d9d9d">
          <path d="M250.500 2298H289.500M250.500 2313H289.500M250.500 2328H289.500" strokeWidth="6" strokeLinecap="round" />
          <rect x="517" y="2298" width="46" height="30" rx="15" strokeWidth="5.500" />
          <path d="M825 2295.500L807 2313L825 2330.500M807 2313H847" strokeWidth="5" strokeLinecap="round" strokeLinejoin="round" />
        </svg>
        <Watermark><Fit w={220} size={30} color="#fff">头条 @浪潮财金V</Fit></Watermark>
      </SysNav>
    </Screen>
  );
}
